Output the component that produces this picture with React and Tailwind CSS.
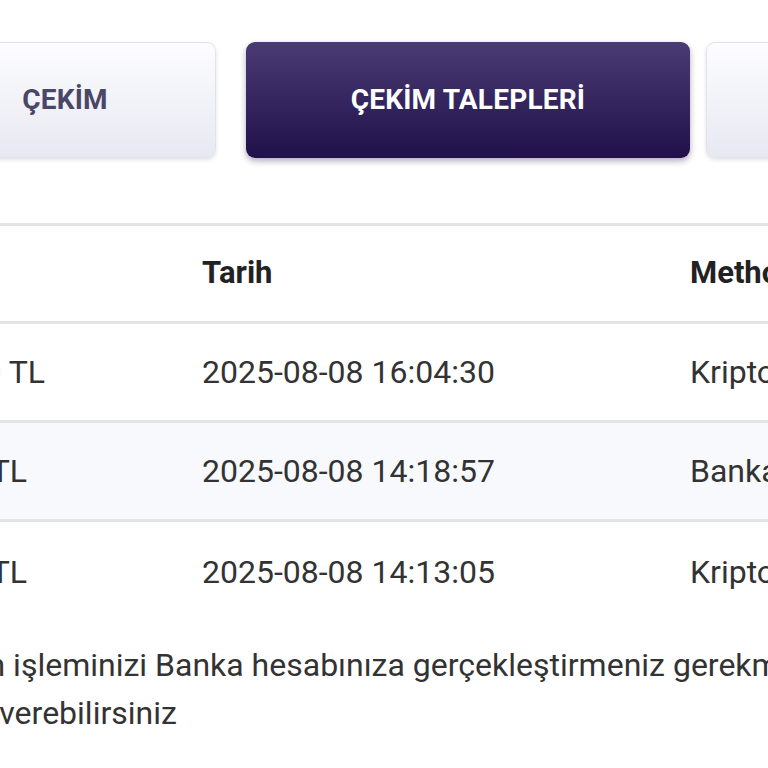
import React from 'react';

const rows = [
  { amount: '10.000 TL', date: '2025-08-08 16:04:30', method: 'Kripto', status: 'Beklemede' },
  { amount: '5.000 TL', date: '2025-08-08 14:18:57', method: 'Banka', status: 'Onaylandı' },
  { amount: '5.000 TL', date: '2025-08-08 14:13:05', method: 'Kripto', status: 'Onaylandı' },
];

const TabButton = ({ label, active, className = '' }) => (
  <button
    className={
      'flex h-[116px] shrink-0 items-center justify-center rounded-[9px] text-[28px] font-bold tracking-[0.2px] ' +
      (active
        ? 'bg-gradient-to-b from-[#4b3b74] to-[#21104b] text-white shadow-[0_3px_6px_rgba(30,15,60,0.35)] '
        : 'border border-[#e2e3ea] bg-gradient-to-b from-[#fdfdff] to-[#e7e9f2] text-[#4a4766] shadow-[0_2px_4px_rgba(0,0,0,0.12)] ') +
      className
    }
  >
    {label}
  </button>
);

export default function App() {
  return (
    <div
      className="h-[768px] w-[768px] overflow-hidden bg-white"
      style={{ fontFamily: 'Roboto, "Noto Sans", sans-serif' }}
    >
      {/* tabs */}
      <div className="ml-[-86px] flex w-max pt-[42px]">
        <TabButton label="ÇEKİM" className="w-[302px]" />
        <TabButton label="ÇEKİM TALEPLERİ" active className="ml-[30px] w-[444px]" />
        <TabButton label="YATIRIM GEÇMİŞİ" className="ml-[16px] w-[444px]" />
      </div>

      {/* requests table */}
      <div className="ml-[-97px] mt-[65px] w-[1200px]">
        <div className="grid h-[101px] grid-cols-[299px_488px_300px_1fr] items-center border-y-[3px] border-[#e4e4e6] text-[31px] font-bold text-[#222]">
          <div>Miktar</div>
          <div>Tarih</div>
          <div>Methodu</div>
          <div>Durum</div>
        </div>
        {rows.map((r, i) => (
          <div
            key={i}
            className={
              'grid h-[99px] grid-cols-[299px_488px_300px_1fr] items-center text-[32px] text-[#333] ' +
              (i < rows.length - 1 ? 'border-b-[3px] border-[#e4e4e6] ' : '') +
              (i === 1 ? 'bg-[#f8f9fc]' : '')
            }
          >
            <div>{r.amount}</div>
            <div>{r.date}</div>
            <div>{r.method}</div>
            <div>{r.status}</div>
          </div>
        ))}
      </div>

      {/* note */}
      <div className="mt-[20px] whitespace-nowrap text-[32px] leading-[48px] text-[#333]">
        <p className="ml-[-140px]">talebinizin işleminizi Banka hesabınıza gerçekleştirmeniz gerekmektedir.</p>
        <p className="ml-[-108px]">talimat verebilirsiniz</p>
      </div>
    </div>
  );
}
